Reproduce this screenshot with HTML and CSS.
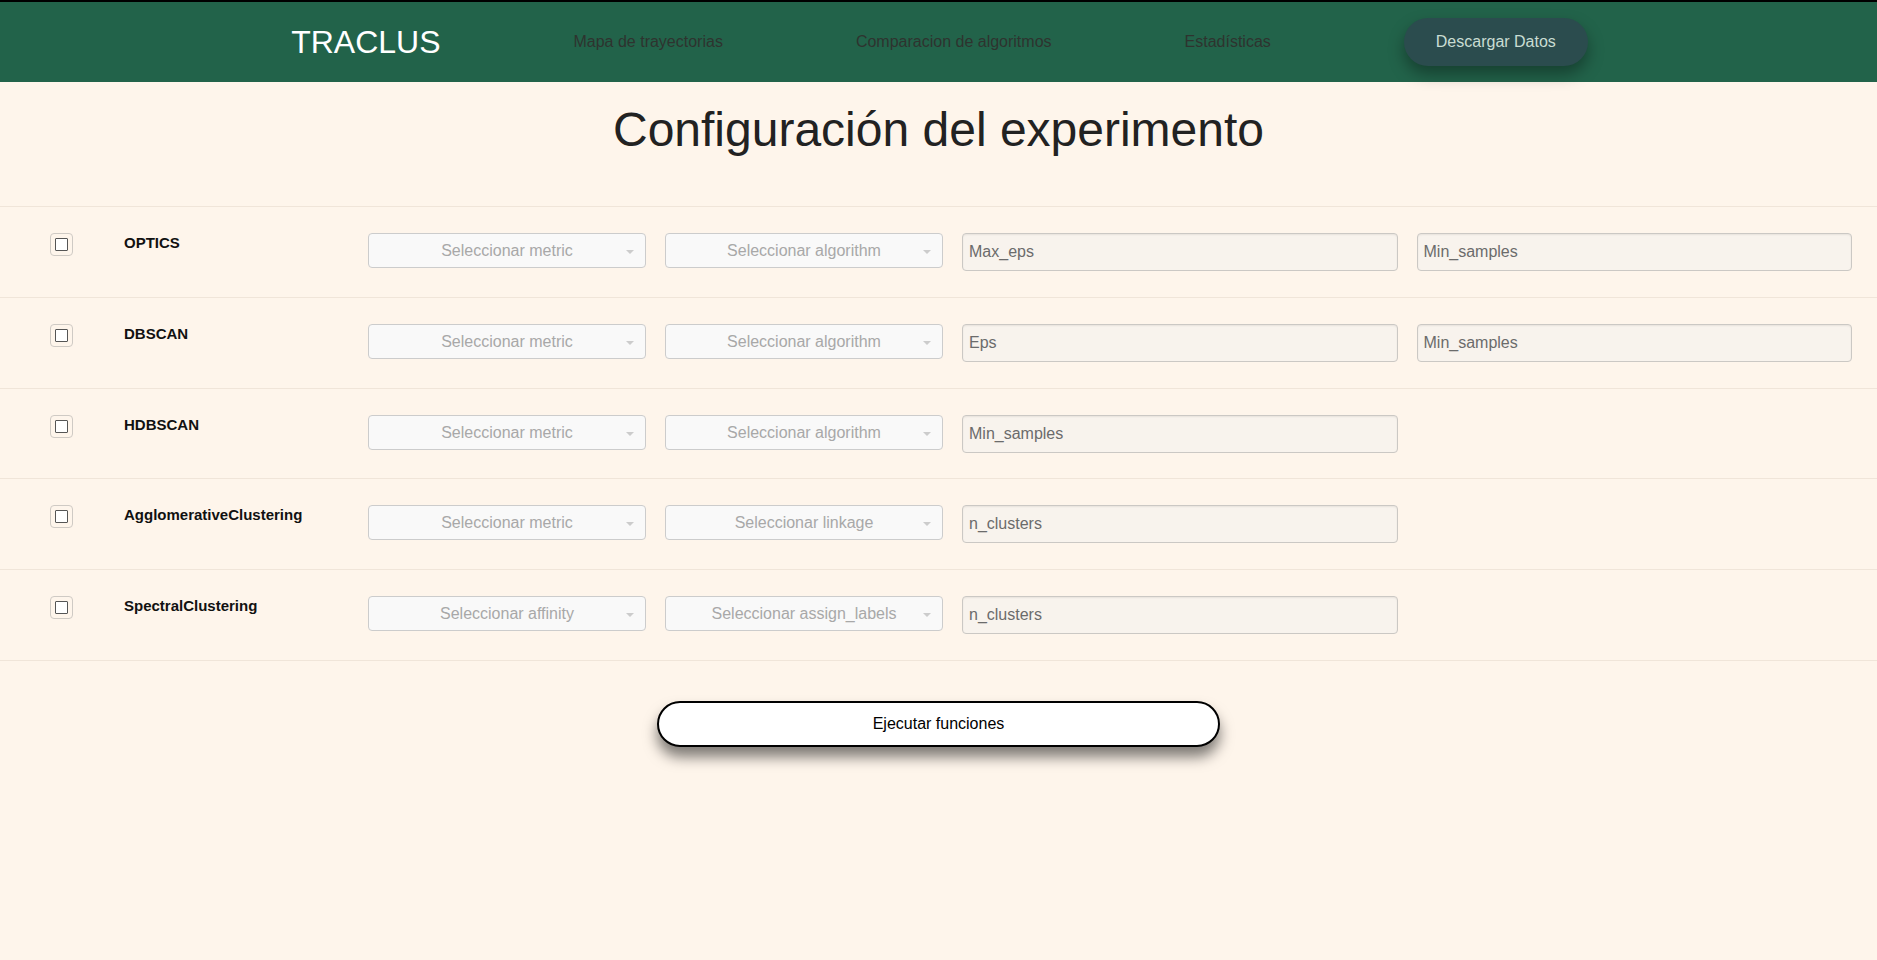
FILE: index.html
```html
<!DOCTYPE html>
<html lang="es">
<head>
<meta charset="utf-8">
<title>TRACLUS</title>
<link rel="stylesheet" href="styles.css">
</head>
<body>
<header class="topbar">
  <div class="brand">TRACLUS</div>
  <a class="nav-link" href="#">Mapa de trayectorias</a>
  <a class="nav-link" href="#">Comparacion de algoritmos</a>
  <a class="nav-link" href="#">Estadísticas</a>
  <a class="nav-btn" href="#">Descargar Datos</a>
</header>

<main>
  <section class="title-wrap">
    <h1 class="title">Configuración del experimento</h1>
  </section>

  <section class="algos">
    <div class="row">
      <div class="check"><span class="check-box"></span></div>
      <div class="name">OPTICS</div>
      <div class="select">Seleccionar metric<span class="arrow"></span></div>
      <div class="select">Seleccionar algorithm<span class="arrow"></span></div>
      <input class="field" type="text" placeholder="Max_eps">
      <input class="field" type="text" placeholder="Min_samples">
    </div>
    <div class="row">
      <div class="check"><span class="check-box"></span></div>
      <div class="name">DBSCAN</div>
      <div class="select">Seleccionar metric<span class="arrow"></span></div>
      <div class="select">Seleccionar algorithm<span class="arrow"></span></div>
      <input class="field" type="text" placeholder="Eps">
      <input class="field" type="text" placeholder="Min_samples">
    </div>
    <div class="row">
      <div class="check"><span class="check-box"></span></div>
      <div class="name">HDBSCAN</div>
      <div class="select">Seleccionar metric<span class="arrow"></span></div>
      <div class="select">Seleccionar algorithm<span class="arrow"></span></div>
      <input class="field" type="text" placeholder="Min_samples">
    </div>
    <div class="row">
      <div class="check"><span class="check-box"></span></div>
      <div class="name">AgglomerativeClustering</div>
      <div class="select">Seleccionar metric<span class="arrow"></span></div>
      <div class="select">Seleccionar linkage<span class="arrow"></span></div>
      <input class="field" type="text" placeholder="n_clusters">
    </div>
    <div class="row">
      <div class="check"><span class="check-box"></span></div>
      <div class="name">SpectralClustering</div>
      <div class="select">Seleccionar affinity<span class="arrow"></span></div>
      <div class="select">Seleccionar assign_labels<span class="arrow"></span></div>
      <input class="field" type="text" placeholder="n_clusters">
    </div>
  </section>

  <div class="run-wrap">
    <button class="run-btn" type="button">Ejecutar funciones</button>
  </div>
</main>
</body>
</html>
```

FILE: styles.css
```css
* { box-sizing: border-box; }

html, body {
  margin: 0;
  padding: 0;
}

body {
  background: #fef5eb;
  font-family: "Liberation Sans", Arial, sans-serif;
  color: #222;
  min-height: 960px;
}

.topbar {
  border-top: 2px solid #000;
  height: 82px;
  background: #22634a;
  display: flex;
  justify-content: center;
  align-items: center;
  gap: 133px;
  padding-left: 2px;
}

.brand {
  color: #fff;
  font-size: 32px;
  line-height: 37px;
}

.nav-link {
  color: #2e332f;
  font-size: 16px;
  text-decoration: none;
}

.nav-btn {
  display: block;
  height: 48px;
  line-height: 48px;
  padding: 0 32px;
  border-radius: 24px;
  background: #2b4c4e;
  color: #c9ddd3;
  font-size: 16px;
  text-decoration: none;
  box-shadow: 0 8px 16px rgba(0, 0, 0, 0.35);
}

.title-wrap {
  padding: 20px 0 49px;
}

.title {
  margin: 0;
  text-align: center;
  font-size: 48px;
  line-height: 55px;
  font-weight: normal;
  color: #222;
}

.algos {
  border-bottom: 1px solid #f0e5d9;
}

.row {
  border-top: 1px solid #f0e5d9;
  padding: 26px 25px 25.75px 50px;
  display: grid;
  grid-template-columns: 23px 257px 278px 278px 1fr 1fr;
  column-gap: 19px;
  align-items: start;
}

.check {
  width: 23px;
  height: 23px;
  border: 1px solid #cfcac4;
  border-radius: 4px;
  display: flex;
  align-items: center;
  justify-content: center;
}

.check-box {
  width: 13px;
  height: 13px;
  border: 1px solid #555;
  border-radius: 1px;
  background: #fff;
}

.name {
  padding-left: 32px;
  margin-top: 1px;
  font-size: 15px;
  font-weight: bold;
  color: #111;
  white-space: nowrap;
}

.select {
  position: relative;
  height: 35px;
  border: 1px solid #ccc;
  border-radius: 4px;
  background: #f9f9f9;
  color: #a8a8a8;
  font-size: 16px;
  line-height: 33px;
  text-align: center;
  white-space: nowrap;
}

.arrow {
  position: absolute;
  right: 11px;
  top: 16px;
  width: 0;
  height: 0;
  border-left: 4px solid transparent;
  border-right: 4px solid transparent;
  border-top: 4px solid #cccccc;
}

.field {
  height: 38px;
  width: 100%;
  border: 1px solid #cbc8c4;
  border-radius: 4px;
  background: #f8f3ed;
  padding: 0 6px;
  font-family: "Liberation Sans", Arial, sans-serif;
  font-size: 16px;
  color: #555;
  box-shadow: inset 0 1px 2px rgba(0, 0, 0, 0.07);
  outline: none;
}

.field::placeholder {
  color: #6b6b6b;
  opacity: 1;
}

.run-wrap {
  display: flex;
  justify-content: center;
  padding-top: 40px;
}

.run-btn {
  width: 563px;
  height: 46px;
  border: 2px solid #000;
  border-radius: 23px;
  background: #fff;
  color: #000;
  font-family: "Liberation Sans", Arial, sans-serif;
  font-size: 16px;
  box-shadow: 0 10px 14px rgba(0, 0, 0, 0.5);
  cursor: pointer;
}
```
